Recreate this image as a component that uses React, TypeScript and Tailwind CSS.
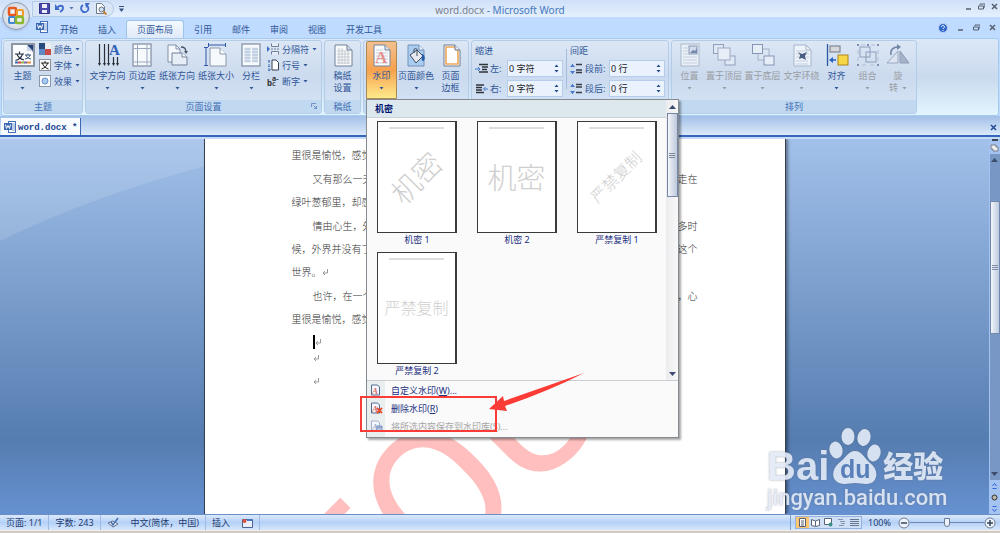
import { useState, type ReactNode } from "react";

const tabs = ["开始", "插入", "页面布局", "引用", "邮件", "审阅", "视图", "开发工具"];

const previews = [
  { label: "机密 1", text: "机密", style: "text-[29px] -rotate-45" },
  { label: "机密 2", text: "机密", style: "text-[29px]" },
  { label: "严禁复制 1", text: "严禁复制", style: "text-[16px] -rotate-45" },
  { label: "严禁复制 2", text: "严禁复制", style: "text-[16px]" },
];

const paragraphs = [
  [{ left: "里很是愉悦，感觉" }],
  [
    { left: "又有那么一天", right: "走在", indent: true },
    { left: "绿叶葱郁里，却感" },
  ],
  [
    { left: "情由心生，外", right: "多时", indent: true },
    { left: "候，外界并没有了", right: "这个" },
    { left: "世界。", mark: true },
  ],
  [
    { left: "也许，在一个", right: "，心", indent: true },
    { left: "里很是愉悦，感觉" },
  ],
] as { left: string; right?: string; indent?: boolean; mark?: boolean }[][];

function Svg({ w = 24, h = 24, children }: { w?: number; h?: number; children: ReactNode }) {
  return (
    <svg width={w} height={h} viewBox={`0 0 ${w} ${h}`} fill="none" className="shrink-0" aria-hidden="true">
      {children}
    </svg>
  );
}

function Caret({ up = false }: { up?: boolean }) {
  return (
    <Svg w={5} h={3}>
      <path d={up ? "M.5 3L2.5 .5L4.500 3Z" : "M.5 0L2.5 2.500L4.500 0Z"} fill="currentColor" />
    </Svg>
  );
}

// ---- ribbon icons ----

const ThemeIcon = () => (
  <Svg>
    <rect x="1" y="1" width="22" height="22" fill="#fbfcfe" stroke="#8d97a4" strokeWidth="2" />
    <path d="M16 2h6v7z" fill="#243f7c" />
    <path d="M16 2v6h6z" fill="#c9d6e8" />
    <path d="M4 11h9M8.500 8.500V11M6 11c1 3.500 3 5 7 6M11.500 11c-1 3.500-3.500 5.500-7 6.500" stroke="#222c3c" strokeWidth="1.100" />
    <path d="M14 12h6M17 10.500V12M15 12c.5 2 2 3.500 5 4M19 12c-.5 2-2 3.500-5 4" stroke="#37507c" />
    <path d="M4 19.500h3" stroke="#3a6bb5" strokeWidth="2" />
    <path d="M7 19.500h3" stroke="#d2473c" strokeWidth="2" />
    <path d="M10 19.500h3" stroke="#8eb548" strokeWidth="2" />
    <path d="M13 19.500h3" stroke="#7f5fa8" strokeWidth="2" />
    <path d="M16 19.500h4" stroke="#e99340" strokeWidth="2" />
  </Svg>
);

const DirectionIcon = () => (
  <Svg>
    <path d="M3.500 1v21M8.500 1v21M12.500 1v21M17.500 14v8M21.500 14v8" stroke="#2b3038" strokeWidth="1.200" />
    <path d="M2 20l1.500 3L5 20zM7 20l1.500 3 1.500-3zM11 20l1.500 3 1.500-3zM16 20l1.500 3 1.500-3zM20 20l1.500 3 1.500-3z" fill="#2b3038" />
    <text x="13" y="12" fontSize="15" fontWeight="700" fill="#2e62b4" fontFamily="Liberation Serif">A</text>
  </Svg>
);

const MarginIcon = () => (
  <Svg>
    <rect x="3" y="1" width="18" height="22" fill="#f7fafd" stroke="#8794a8" strokeWidth="1.300" />
    <path d="M7.500 1.500v21M17 1.500v21M3.500 5.500h17M3.500 19h17" stroke="#9aa8c1" />
  </Svg>
);

const OrientationIcon = () => (
  <Svg>
    <path d="M3 2h8l4 4v13H3z" fill="#f4f8fc" stroke="#8190a7" />
    <path d="M11 2v4h4" stroke="#8190a7" />
    <path d="M7 10h10l5 4v8H7z" fill="#e7eef6" stroke="#71819b" />
    <path d="M17 10v4h5" fill="#fff" stroke="#71819b" />
    <path d="M16 4c3 0 5 1 5 5" stroke="#4b5564" strokeWidth="1.300" />
    <path d="M19 8h4l-2 3z" fill="#4b5564" />
  </Svg>
);

const SizeIcon = () => (
  <Svg>
    <path d="M6 5h10l6 6v12H6z" fill="#f6f9fc" stroke="#8b98ad" />
    <path d="M16 5v6h6" fill="#fff" stroke="#8b98ad" />
    <path d="M5 2h16M2 5v17" stroke="#2c57aa" />
    <path d="M4.500 0v4M21.500 0v4M0 4.500h4M0 22.500h4" stroke="#2c57aa" />
  </Svg>
);

const ColumnsIcon = () => (
  <Svg>
    <rect x="3" y="1" width="18" height="22" fill="#f7fafd" stroke="#8794a8" strokeWidth="1.300" />
    <path d="M5.500 6h6M13 6h6M5.500 9h6M13 9h6M5.500 12h6M13 12h6M5.500 15h6M13 15h6M5.500 18h6M13 18h6" stroke="#c4d1e4" strokeWidth="2.400" />
  </Svg>
);

const GridPaperIcon = () => (
  <Svg>
    <path d="M4 2h12l5 5v16H4z" fill="#f8fafc" stroke="#718096" />
    <path d="M16 2v5h5" fill="#cdd8e6" stroke="#718096" />
    <path d="M6 8h13M6 11h13M6 14h13M6 17h13M6 20h13M8 5v16M11 5v16M14 8v13M17 8v13" stroke="#b9c0ca" strokeWidth=".8" />
  </Svg>
);

const WatermarkIcon = () => (
  <Svg>
    <path d="M4 2h11l5 5v16H4z" fill="#fafbfd" stroke="#74839c" />
    <path d="M15 2v5h5" fill="#dbe4ef" stroke="#74839c" />
    <path d="M6 7h7M6 10h12M6 13h12M6 16h12M6 20h12" stroke="#c8d0dc" />
    <text x="5" y="20" fontSize="17" fontWeight="700" fill="#e4908c" fontFamily="Liberation Serif">A</text>
  </Svg>
);

const PageColorIcon = () => (
  <Svg>
    <path d="M4 2h11l5 5v16H4z" fill="#a8cdf1" stroke="#7590b5" />
    <path d="M15 2v5h5" fill="#eaf3fb" stroke="#7590b5" />
    <path d="M6 12l7-5 6 6-7 7z" fill="#e5e9ee" stroke="#414b5b" />
    <path d="M13 13V7c0-2-3-2-3 0v3" stroke="#414b5b" />
    <path d="M18 11c4 1 3 7 1 7s-1-3-1-7z" fill="#255aa9" />
  </Svg>
);

const BorderIcon = () => (
  <Svg>
    <path d="M5 2h11l5 5v16H5z" fill="#fff" stroke="#6c7c92" />
    <path d="M7 4h8l4 4v13H7z" stroke="#eda65c" strokeWidth="1.600" />
    <path d="M16 2v5h5" fill="#e2eaf3" stroke="#6c7c92" />
  </Svg>
);

const PositionIcon = () => (
  <Svg>
    <rect x="3" y="1" width="18" height="22" fill="#e9f0f8" stroke="#aab7ca" />
    <rect x="11" y="3" width="8" height="8" fill="#d1dbea" stroke="#8999b3" />
    <path d="M12 10l3-3 2 1 2-3v5z" fill="#7388ab" />
    <path d="M5 5h5M5 8h5M5 11h5M5 14h14M5 17h14M5 20h14" stroke="#c6d0df" />
  </Svg>
);

const FrontIcon = () => (
  <Svg>
    <rect x="1.500" y="1.500" width="10" height="9" fill="#dfe8f4" stroke="#8fa0bd" />
    <rect x="13" y="13" width="10" height="9" fill="#dfe8f4" stroke="#8fa0bd" />
    <rect x="6" y="5" width="12" height="12" fill="#e8eef7" stroke="#9ba9c1" />
  </Svg>
);

const BackIcon = () => (
  <Svg>
    <rect x="7" y="6" width="11" height="11" fill="#dbe5f2" stroke="#a3b1c8" />
    <rect x="1.500" y="1.500" width="10" height="9" fill="#e6edf7" stroke="#8595b4" />
    <rect x="13" y="13" width="10" height="9" fill="#e6edf7" stroke="#8595b4" />
  </Svg>
);

const WrapIcon = () => (
  <Svg>
    <path d="M4 2h12l5 5v16H4z" fill="#edf3fa" stroke="#a7b5ca" />
    <path d="M16 2v5h5" stroke="#a7b5ca" />
    <path d="M6 8h12M6 11h3M16 11h3M6 14h3M16 14h3M6 18h12M6 21h12" stroke="#c2cedf" />
    <path d="M8 9l4 2 5-2-2 4 1 4-4-2-3 1 1-4z" fill="#4a5e84" />
  </Svg>
);

const AlignIcon = () => (
  <Svg>
    <path d="M2.500 1v22" stroke="#2c57a3" strokeWidth="1.300" />
    <rect x="5" y="3" width="10" height="6" fill="#d6d8da" stroke="#6f7681" />
    <rect x="13" y="12" width="10" height="10" fill="#f8d747" stroke="#ab851f" />
    <path d="M11 17H6" stroke="#2c63bd" strokeWidth="1.600" />
    <path d="M4 17l4-3v6z" fill="#2c63bd" />
  </Svg>
);

const CombineIcon = () => (
  <Svg>
    <rect x="4" y="4" width="10" height="10" stroke="#8e9dbb" />
    <rect x="10" y="9" width="10" height="10" stroke="#8e9dbb" />
    <path d="M1 1h2v2H1zM21 1h2v2h-2zM1 21h2v2H1zM21 21h2v2h-2zM11 1h2v2h-2z" fill="#7e8faf" />
    <path d="M5 2h4M15 2h4M2 7v4M2 14v4M22 7v4M22 14v4M6 22h4M14 22h4" stroke="#b3bfd3" />
  </Svg>
);

const RotateIcon = () => (
  <Svg>
    <path d="M1 20h11V8z" fill="#dce4ef" stroke="#9aa8c0" />
    <path d="M14 8l9 12h-9z" fill="#a5b2c7" stroke="#8d9cb6" />
    <path d="M5 12C4 7 7 4 12 4" stroke="#7486a6" strokeWidth="1.500" />
    <path d="M11 1l4 3-4 3z" fill="#7486a6" />
  </Svg>
);

const PageAIcon = ({ remove = false, muted = false }: { remove?: boolean; muted?: boolean }) => (
  <Svg w={13} h={12}>
    <path d="M1.500 1h6l2 2v8h-8z" fill="#f5f8fc" stroke={muted ? "#9fb1ce" : "#566a91"} />
    <text x="2" y="10" fontSize="9" fontStyle="italic" fontWeight="700" fill={muted ? "#9db0d2" : "#d6716e"} fontFamily="Liberation Serif">A</text>
    {remove && <path d="M7 6l5 5M12 6l-5 5" stroke="#e94f2d" strokeWidth="1.800" />}
    {muted && <path d="M7 6h5v5H7zM8 6v2h3V6" fill="#c5d3ea" stroke="#7d94bf" />}
  </Svg>
);

const WordIcon = () => (
  <Svg w={12} h={12}>
    <rect x="4.500" y=".5" width="7" height="11" fill="#fff" stroke="#4670b5" />
    <path d="M8 3h3M8 5h3M8 7h3M8 9h3" stroke="#7b9bd0" />
    <rect x="0" y="2" width="8" height="7" fill="#3b68b4" />
    <path d="M1.500 3.500l1 4L4 4.500l1.500 3 1-4" stroke="#fff" />
  </Svg>
);

const Launcher = () => (
  <Svg w={6} h={6}>
    <path d="M.5 4V.5H5M2.500 2.500l3 3M5.500 3v2.500H3" stroke="#6f93c6" />
  </Svg>
);

type GroupProps = { label: string; className?: string; launcher?: boolean; children: ReactNode };

function Group({ label, className = "", launcher, children }: GroupProps) {
  return (
    <section
      className={`flex shrink-0 flex-col rounded-[3px] border border-[#b3cde9] bg-linear-to-b from-[#dce7f5] via-[#cbdaee] to-[#d5e4f5] ${className}`}
    >
      <div className="flex h-[59px] items-start px-[2px]">{children}</div>
      <h2 className="relative h-[13px] rounded-b-[2px] bg-[#c1d8f1] text-center leading-[13px] text-[#4471b4]">
        {label}
        {launcher && (
          <button type="button" aria-label={`${label}选项`} className="absolute right-1 bottom-1">
            <Launcher />
          </button>
        )}
      </h2>
    </section>
  );
}

type BigButtonProps = {
  icon: ReactNode;
  label: string;
  second?: string;
  width: string;
  caret?: boolean;
  disabled?: boolean;
};

function BigButton({ icon, label, second, width, caret = true, disabled }: BigButtonProps) {
  return (
    <button
      type="button"
      disabled={disabled}
      className={`flex h-[57px] shrink-0 flex-col items-center pt-[2px] whitespace-nowrap ${width} ${
        disabled ? "text-[#9a9da3]" : "text-[#2f5697]"
      }`}
    >
      {icon}
      <span className="mt-[3px] leading-3">{label}</span>
      <span className="flex h-3 items-center gap-1 leading-3">
        {second}
        {caret && <Caret />}
      </span>
    </button>
  );
}

function SmallButton({ icon, label }: { icon: ReactNode; label: string }) {
  return (
    <button type="button" className="flex h-4 items-center gap-[3px] whitespace-nowrap text-[#2f5697]">
      {icon}
      {label}
      <Caret />
    </button>
  );
}

function Stepper({ id, label, unit, after }: { id: string; label: string; unit: string; after?: boolean }) {
  const [value, setValue] = useState(0);

  return (
    <div className="flex h-[17px] items-center">
      <Svg w={13} h={12}>
        {unit === "行" ? (
          <>
            <path d={after ? "M6 1.500h6M6 4h6M6 9.500h6" : "M6 1.500h6M6 7h6M6 9.500h6"} stroke="#3a3e45" strokeWidth="1.600" />
            <path d="M2.500 1v3M2.500 8v3" stroke="#4779cb" />
            <path d="M0 4l2.500-3L5 4zM0 8l2.500 3L5 8z" fill="#4779cb" />
          </>
        ) : (
          <>
            <path
              d={after ? "M1 2h8M1 4.500h6M1 7h6M1 9.500h8" : "M4 1.500h9M7 4h6M7 6.500h5M4 9h9"}
              stroke="#30343b"
              strokeWidth="1.500"
            />
            <path d={after ? "M13 6H9M10.500 4L8.500 6l2 2" : "M0 6h4M3 4l2 2-2 2"} stroke="#4779cb" />
          </>
        )}
      </Svg>
      <label htmlFor={id} className="mx-[2px] flex-1 whitespace-nowrap text-[#2f5697]">
        {label}:
      </label>
      <div className="flex h-[17px] w-[56px] border border-[#b5cdea] bg-[#eaf3fd]">
        <input
          id={id}
          value={`${value} ${unit}`}
          onChange={(e) => setValue(parseInt(e.target.value) || 0)}
          className="w-0 flex-1 bg-transparent pl-px text-[#222] outline-none"
        />
        <span className="flex w-3 flex-col items-center justify-between py-[3px] text-[#25488a]">
          <button type="button" aria-label={`${label}增加`} onClick={() => setValue(value + 1)}>
            <Caret up />
          </button>
          <button type="button" aria-label={`${label}减少`} onClick={() => setValue(value - 1)}>
            <Caret />
          </button>
        </span>
      </div>
    </div>
  );
}

function WatermarkMenu() {
  return (
    <div className="absolute top-full left-0 z-20 w-[313px] border border-[#868b91] bg-[#fafafa] text-[#1b2f7e] shadow-[2px_2px_2px_rgba(0,0,0,0.35)]">
      <div className="flex border-b border-[#c9ced2]">
        <div className="flex-1">
          <h3 className="h-[18px] border-b border-[#c9d2d8] bg-[#dde7ee] pl-2 leading-[17px] font-bold text-[#00156e]">
            机密
          </h3>
          <div className="grid grid-cols-[80px_80px_80px] gap-x-5 gap-y-[5px] pt-[3px] pb-[2px] pl-[10px]">
            {previews.map((item) => (
              <button type="button" key={item.label} className="text-center whitespace-nowrap">
                <span className="relative flex h-[112px] items-center justify-center border border-r-2 border-[#3a3a3a] bg-white">
                  <span className="absolute top-[5px] right-[11px] left-[11px] h-[2px] bg-[#dedede]" />
                  <span className={`font-light text-[#cfcfcf] ${item.style}`}>{item.text}</span>
                </span>
                <span className="block h-[14px] leading-[14px]">{item.label}</span>
              </button>
            ))}
          </div>
        </div>
        <div className="flex w-3 flex-col items-center justify-between bg-linear-to-r from-[#ececee] to-[#f8f8f9] text-[#3c4a70]">
          <div className="flex w-full flex-col items-center">
            <button type="button" aria-label="向上滚动" className="flex h-[13px] items-center">
              <Svg w={7} h={4}>
                <path d="M0 4L3.500 0L7 4Z" fill="currentColor" />
              </Svg>
            </button>
            <div className="flex h-[84px] w-[11px] items-center justify-center border border-[#7886a6] bg-linear-to-r from-[#f3f5f9] to-[#bdc8dc]">
              <span className="flex h-[5px] w-[6px] items-center border-y border-[#7e879c]">
                <span className="h-px w-full bg-[#7e879c]" />
              </span>
            </div>
          </div>
          <button type="button" aria-label="向下滚动" className="flex h-[13px] items-center">
            <Svg w={7} h={4}>
              <path d="M0 0L3.500 4L7 0Z" fill="currentColor" />
            </Svg>
          </button>
        </div>
      </div>
      <div className="bg-linear-to-r from-[#e9eeee] from-[18px] to-[#fafafa] to-[18px] pb-[2px]">
        <button type="button" className="flex h-[18px] w-full items-center gap-2 pl-[3px]">
          <PageAIcon />
          <span>
            自定义水印(<u>W</u>)...
          </span>
        </button>
        <button type="button" className="flex h-[18px] w-full items-center gap-2 pl-[3px]">
          <PageAIcon remove />
          <span>
            删除水印(<u>R</u>)
          </span>
        </button>
        <button type="button" disabled className="flex h-[18px] w-full items-center gap-2 pl-[3px] text-[#a5a5a5]">
          <PageAIcon muted />
          <span>
            将所选内容保存到水印库(<u>S</u>)...
          </span>
        </button>
      </div>
      {/* callout on the delete entry */}
      <div className="absolute top-[296px] -left-[7px] h-[36px] w-[137px] border-2 border-[#fb3b36]" />
      <svg width="96" height="40" viewBox="0 0 96 40" className="absolute top-[273px] left-[122px]" aria-hidden="true">
        <path d="M95 0L15 28L14 23L0 36L18 38L16 33Q60 18 95 0Z" fill="#fb3b36" />
      </svg>
    </div>
  );
}

function Ribbon() {
  return (
    <div className="relative z-10 mx-px flex gap-[2px] rounded-[3px] border border-[#a5cbef] bg-linear-to-b from-[#dce8f7] via-[#cadaee] to-[#e2f5ff] p-px">
      <Group label="主题" className="w-[80px]">
        <BigButton icon={<ThemeIcon />} label="主题" width="w-[33px]" />
        <div className="flex flex-col">
          <SmallButton
            icon={
              <Svg w={12} h={12}>
                <path d="M0 0h6v6H0z" fill="#274a7d" />
                <path d="M6 0h6v6H6z" fill="#eceef0" />
                <path d="M0 6h6v6H0z" fill="#5c8ac4" />
                <path d="M6 6h6v6H6z" fill="#c94c48" />
              </Svg>
            }
            label="颜色"
          />
          <SmallButton
            icon={
              <Svg w={12} h={12}>
                <rect x=".5" y=".5" width="11" height="11" fill="#f8f8f8" stroke="#8a919b" />
                <path d="M2 4h8M6 2v2M3.500 4c.5 3 3 5 6 6M8.500 4c-.5 3-3 5-6 6" stroke="#222" />
              </Svg>
            }
            label="字体"
          />
          <SmallButton
            icon={
              <Svg w={12} h={12}>
                <rect x=".5" y=".5" width="11" height="11" fill="#fbfcfe" stroke="#8a97aa" />
                <circle cx="6" cy="6" r="3" fill="#a9c8f0" stroke="#6390cf" />
              </Svg>
            }
            label="效果"
          />
        </div>
      </Group>

      <Group label="页面设置" className="w-[237px]" launcher>
        <BigButton icon={<DirectionIcon />} label="文字方向" width="w-[39px]" />
        <BigButton icon={<MarginIcon />} label="页边距" width="w-[30px]" />
        <BigButton icon={<OrientationIcon />} label="纸张方向" width="w-[40px]" />
        <BigButton icon={<SizeIcon />} label="纸张大小" width="w-[38px]" />
        <BigButton icon={<ColumnsIcon />} label="分栏" width="w-[32px]" />
        <div className="flex flex-col">
          <SmallButton
            icon={
              <Svg w={12} h={12}>
                <path d="M4.500.5v3h7v-3M4.500 11.500v-3h7v3" fill="#e8eef6" stroke="#71819a" />
                <path d="M0 3l3 3-3 3z" fill="#3d70c2" />
                <path d="M4 6h8" stroke="#71819a" strokeDasharray="2 1" />
              </Svg>
            }
            label="分隔符"
          />
          <SmallButton
            icon={
              <Svg w={12} h={12}>
                <path d="M5 1h4l2.500 2.500V11H5z" fill="#fff" stroke="#39414d" />
                <path d="M1 2h2M2 1v3M1 6h2M1 7.500h2M1 10h2v1.500H1" stroke="#4a78bc" />
              </Svg>
            }
            label="行号"
          />
          <SmallButton
            icon={
              <Svg w={12} h={12}>
                <text x="0" y="11" fontSize="8" fontWeight="700" fill="#333">b</text>
                <text x="5" y="6" fontSize="7" fontWeight="700" fill="#333">a-</text>
                <text x="5" y="11" fontSize="7" fontWeight="700" fill="#555">c</text>
              </Svg>
            }
            label="断字"
          />
        </div>
      </Group>

      <Group label="稿纸" className="w-[37px]">
        <BigButton icon={<GridPaperIcon />} label="稿纸" second="设置" width="w-[31px]" caret={false} />
      </Group>

      <Group label="页面背景" className="w-[106px]">
        <div className="relative">
          <button
            type="button"
            aria-haspopup="true"
            aria-expanded="true"
            className="flex h-[58px] w-[31px] flex-col items-center rounded-t-[2px] border border-[#a98a55] bg-linear-to-b from-[#f3c08e] via-[#f7a14d] to-[#fdea8c] pt-px text-[#2f5697]"
          >
            <WatermarkIcon />
            <span className="mt-[3px] leading-3">水印</span>
            <span className="flex h-3 items-center">
              <Caret />
            </span>
          </button>
          <WatermarkMenu />
        </div>
        <BigButton icon={<PageColorIcon />} label="页面颜色" width="w-[38px]" />
        <BigButton icon={<BorderIcon />} label="页面" second="边框" width="w-[31px]" caret={false} />
      </Group>

      <Group label="段落" className="w-[198px]">
        <fieldset className="w-[89px] pl-px">
          <legend className="h-[19px] leading-[19px] text-[#2f5697]">缩进</legend>
          <div className="flex flex-col gap-[3px]">
            <Stepper id="indent-left" label="左" unit="字符" />
            <Stepper id="indent-right" label="右" unit="字符" after />
          </div>
        </fieldset>
        <div className="mt-2 ml-[3px] h-10 w-px bg-[#a5bddd]" />
        <fieldset className="w-[98px] pl-[3px]">
          <legend className="h-[19px] leading-[19px] text-[#2f5697]">间距</legend>
          <div className="flex flex-col gap-[3px]">
            <Stepper id="space-before" label="段前" unit="行" />
            <Stepper id="space-after" label="段后" unit="行" after />
          </div>
        </fieldset>
      </Group>

      <Group label="排列" className="w-[246px]">
        <BigButton icon={<PositionIcon />} label="位置" width="w-[31px]" disabled />
        <BigButton icon={<FrontIcon />} label="置于顶层" width="w-[38px]" disabled />
        <BigButton icon={<BackIcon />} label="置于底层" width="w-[39px]" disabled />
        <BigButton icon={<WrapIcon />} label="文字环绕" width="w-[39px]" disabled />
        <BigButton icon={<AlignIcon />} label="对齐" width="w-[31px]" />
        <BigButton icon={<CombineIcon />} label="组合" width="w-[31px]" disabled />
        <BigButton icon={<RotateIcon />} label="旋" second="转" width="w-[30px]" disabled />
      </Group>
    </div>
  );
}

function WindowButtons({ wide = false }: { wide?: boolean }) {
  return (
    <div className={`flex items-center text-[#56606e] ${wide ? "gap-[9px]" : "gap-[6px]"}`}>
      <button type="button" aria-label="最小化">
        <Svg w={7} h={7}>
          <path d="M1 6h5" stroke="currentColor" strokeWidth="1.500" />
        </Svg>
      </button>
      <button type="button" aria-label="还原">
        <Svg w={7} h={7}>
          <path d="M2 2V1h5v3H6M.5 3h5v3h-5z" stroke="currentColor" />
        </Svg>
      </button>
      <button type="button" aria-label="关闭">
        <Svg w={7} h={7}>
          <path d="M1 1l5 5M6 1L1 6" stroke="currentColor" strokeWidth="1.500" />
        </Svg>
      </button>
    </div>
  );
}

function Header() {
  return (
    <header className="relative">
      <button
        type="button"
        aria-label="Office 按钮"
        className="absolute top-[2px] left-[2px] z-10 flex size-[28px] items-center justify-center rounded-full border border-[#8d9bb0] bg-radial from-white to-[#c3ccd9] shadow-sm"
      >
        <Svg w={20} h={20}>
          <rect x="3" y="2" width="7" height="7" rx="1" stroke="#e8591f" strokeWidth="2.500" />
          <rect x="11" y="4" width="6" height="6" rx="1" stroke="#f09c2c" strokeWidth="2" />
          <rect x="3" y="11" width="6" height="6" rx="1" stroke="#4287cf" strokeWidth="2" />
          <rect x="10" y="11" width="7" height="6" rx="1" stroke="#8ab82e" strokeWidth="2.400" />
        </Svg>
      </button>
      <div className="grid h-[17px] grid-cols-[1fr_auto_1fr] items-center bg-linear-to-b from-[#cfe0f8] to-[#e5f0fd]">
        <div className="flex items-center pl-[32px]">
          <div className="flex h-4 w-[82px] items-center rounded-r-full border border-[#b4cbe8] bg-[#d9e6f7] pl-[6px] text-[#5277b5]">
            <button type="button" aria-label="保存">
              <Svg w={11} h={11}>
                <path d="M.5.5h10v10H.5z" fill="#4c49ae" stroke="#34328a" />
                <path d="M3 1h5v4H3zM3 7h5v3H3z" fill="#eceefa" />
              </Svg>
            </button>
            <button type="button" aria-label="撤消" className="ml-[5px]">
              <Svg w={10} h={11}>
                <path d="M2 5C4 2 8 2 8 5c0 2-1 3-3 4" stroke="#3c6bcd" strokeWidth="1.800" />
                <path d="M0 1v6h5z" fill="#3c6bcd" />
              </Svg>
            </button>
            <span className="mx-1">
              <Caret />
            </span>
            <button type="button" aria-label="重复" className="ml-[2px]">
              <Svg w={10} h={11}>
                <path d="M3 2C-1 5 2 10 6 9c3-1 3-5 1-6" stroke="#3c6bcd" strokeWidth="1.800" />
                <path d="M5 0h5L6 5z" fill="#3c6bcd" />
              </Svg>
            </button>
            <button type="button" aria-label="打印预览" className="ml-[5px]">
              <Svg w={12} h={12}>
                <path d="M1.500.5h5l3 3v7h-8z" fill="#fff" stroke="#6d7d96" />
                <circle cx="6.500" cy="6.500" r="2.500" fill="#cfe0ee" stroke="#68727f" />
                <path d="M8.500 8.500l3 3" stroke="#cb7f27" strokeWidth="1.800" />
              </Svg>
            </button>
          </div>
          <button type="button" aria-label="自定义快速访问工具栏" className="ml-[5px] text-[#35507f]">
            <Svg w={5} h={6}>
              <path d="M0 .5h5" stroke="currentColor" />
              <path d="M0 2.500h5L2.500 6z" fill="currentColor" />
            </Svg>
          </button>
        </div>
        <h1 className="pt-[3px] text-[10px] leading-none text-[#7b828d]">
          word.docx <span className="text-[#4678bd]">- Microsoft Word</span>
        </h1>
        <div className="-mt-1 flex justify-end pr-[2px]">
          <WindowButtons />
        </div>
      </div>
      <nav className="flex h-[21px] items-stretch bg-[#bfdbff] pr-1 pl-[36px]">
        <span className="mt-[4px] mr-[2px]">
          <WordIcon />
        </span>
        <div role="tablist" className="flex">
          {tabs.map((tab) => (
            <button
              type="button"
              role="tab"
              key={tab}
              aria-selected={tab === "页面布局"}
              className={`mt-[3px] rounded-t-[3px] px-[10px] leading-none text-[#2f5697] ${
                tab === "页面布局" ? "border-x border-t border-[#9dc3ec] bg-linear-to-b from-[#f4f9fe] to-[#dfeaf8]" : ""
              }`}
            >
              {tab}
            </button>
          ))}
        </div>
        <div className="ml-auto flex items-center gap-[9px]">
          <button type="button" aria-label="帮助">
            <Svg w={10} h={10}>
              <circle cx="5" cy="5" r="4.500" fill="#3167c8" stroke="#b7cdf0" />
              <path d="M3.500 4c0-2 3-2 3 0 0 1-1.500 1-1.500 2M5 7v1" stroke="#fff" />
            </Svg>
          </button>
          <WindowButtons wide />
        </div>
      </nav>
    </header>
  );
}

function Mark() {
  return (
    <Svg w={6} h={7}>
      <path d="M5.500 0v4H1M3 2L1 4l2 2" stroke="#9a9a9a" />
    </Svg>
  );
}

function Workspace() {
  return (
    <main className="relative flex min-h-0 flex-1 border-t-2 border-[#c4daf5] bg-linear-to-b from-[#a2c1ea] via-[#567db0] via-80% to-[#6691d1]">
      <svg className="absolute top-0 left-0" width="205" height="102" viewBox="0 0 205 102" aria-hidden="true">
        <path d="M0 0H205V27Q90 58 0 102Z" fill="#fff" fillOpacity=".12" />
      </svg>
      <div className="flex min-w-0 flex-1 justify-center overflow-hidden">
        <article className="relative w-[582px] shrink-0 overflow-hidden border-x border-[#35404f] bg-white px-[87px] pt-[5px] font-['Liberation_Serif','Noto_Sans_CJK_SC',serif] text-[10px] leading-[23px] font-light text-[#333] shadow-[2px_0_3px_rgba(0,0,0,0.4)]">
          <div className="absolute top-[258px] left-[63px] origin-center -rotate-45 font-['Liberation_Sans_Narrow','Roboto',sans-serif] text-[188px] leading-none font-normal whitespace-nowrap text-[#ffbfbf]">
            FOU
          </div>
          <div className="relative flex flex-col gap-px">
            {paragraphs.map((lines, i) => (
              <div key={i}>
                {lines.map((line) => (
                  <p key={line.left} className={`flex justify-between ${line.indent ? "pl-[21px]" : ""}`}>
                    <span className="flex items-center">
                      {line.left}
                      {line.mark && <Mark />}
                    </span>
                    <span>{line.right}</span>
                  </p>
                ))}
              </div>
            ))}
            <div className="flex flex-col pl-[21px]">
              <p className="flex h-5 items-center">
                <span className="h-[14px] w-[2px] bg-black" />
                <Mark />
              </p>
              <p className="flex h-3 items-center">
                <Mark />
              </p>
              <p className="mt-[11px] flex h-3 items-center">
                <Mark />
              </p>
            </div>
          </div>
        </article>
      </div>
      <div className="flex w-[11px] flex-col items-center bg-[#a5c3f0] text-[#3c4c6c]">
        <span className="h-[2px] w-[6px] bg-[#3c4658]" />
        <button type="button" aria-label="标尺" className="flex h-[13px] items-center">
          <Svg w={9} h={9}>
            <path d="M1 2h5v2h2v4H3V6H1z" fill="#eee" stroke="#777f8d" />
          </Svg>
        </button>
        <div className="flex w-[10px] flex-1 flex-col items-center justify-between bg-[#7897c5]">
          <div className="flex w-full flex-col items-center">
            <button type="button" aria-label="上一行" className="flex h-3 items-center">
              <Svg w={7} h={4}>
                <path d="M0 4L3.500 0L7 4Z" fill="currentColor" />
              </Svg>
            </button>
            <div className="mt-[35px] flex h-[133px] w-full items-center justify-center border border-[#7187ae] bg-linear-to-r from-[#f2f5f9] to-[#bdcbe0]">
              <span className="flex h-[5px] w-[6px] items-center border-y border-[#7f8ca6]">
                <span className="h-px w-full bg-[#7f8ca6]" />
              </span>
            </div>
          </div>
          <button type="button" aria-label="下一行" className="flex h-3 items-center">
            <Svg w={7} h={4}>
              <path d="M0 0L3.500 4L7 0Z" fill="currentColor" />
            </Svg>
          </button>
        </div>
        <div className="flex h-[34px] flex-col items-center justify-around">
          <button type="button" aria-label="前一页">
            <Svg w={5} h={6}>
              <path d="M.5 3l2-2.500 2 2.500M.5 5.500h4" stroke="#2f65e0" />
            </Svg>
          </button>
          <button type="button" aria-label="选择浏览对象">
            <Svg w={7} h={7}>
              <circle cx="3.500" cy="3.500" r="2.500" fill="#b9b6ac" stroke="#333" />
            </Svg>
          </button>
          <button type="button" aria-label="下一页">
            <Svg w={5} h={6}>
              <path d="M.5.5h4M.5 3l2 2.500 2-2.500" stroke="#2f65e0" />
            </Svg>
          </button>
        </div>
      </div>
      <Logo />
    </main>
  );
}

function Logo() {
  return (
    <div className="pointer-events-none absolute right-[54px] bottom-[2px] w-[179px] font-['Roboto','Noto_Sans_CJK_SC',sans-serif] text-[#e3ebf7] opacity-90 drop-shadow-[0_0_1px_rgba(90,100,120,0.6)]">
      <div className="flex items-end">
        <span className="font-['Liberation_Sans',sans-serif] text-[40px] leading-[36px] font-bold">Bai</span>
        <Svg w={52} h={57}>
          <g fill="#e3ebf7">
            <ellipse cx="7" cy="23" rx="6.500" ry="8.500" transform="rotate(-12 7 23)" />
            <ellipse cx="19" cy="9.500" rx="6.500" ry="8.500" />
            <ellipse cx="35" cy="10.500" rx="6.500" ry="8.500" transform="rotate(15 35 10.500)" />
            <ellipse cx="45" cy="26" rx="6.500" ry="8.500" transform="rotate(15 45 26)" />
            <path d="M26 24c7 0 10 8 15 12 7 5 8 13 4 18-5 5-12 2-19 2s-13 3-19-2c-5-5-3-13 3-18 6-4 9-12 16-12z" />
          </g>
          <text x="11" y="51" fontSize="25" fontWeight="700" fill="#587fb9" fontFamily="Liberation Sans">du</text>
        </Svg>
        <span className="pb-[2px] pl-[2px] text-[30px] leading-[30px] font-black">经验</span>
      </div>
      <p className="text-[22px] leading-[28px] font-medium">jingyan.baidu.com</p>
    </div>
  );
}

const separator = "flex h-full items-center border-r border-[#9dbbe4]";

function StatusBar() {
  return (
    <footer>
      <div className="flex h-4 items-center border-t border-[#6a8fc6] bg-linear-to-b from-[#dce9fc] via-[#b4d1f7] to-[#d8e7fb] text-[#1f3a70]">
        <span className={`px-[6px] ${separator}`}>页面: 1/1</span>
        <span className={`px-[6px] ${separator}`}>字数: 243</span>
        <span className={`gap-[12px] px-[6px] ${separator}`}>
          <Svg w={12} h={11}>
            <path d="M1 6l5-2 5 3-5 3z" fill="#f2f4f8" stroke="#5d6f8e" />
            <path d="M4 5l2 3 5-7" stroke="#4770b3" strokeWidth="1.500" />
          </Svg>
          中文(简体，中国)
        </span>
        <span className={`gap-[12px] px-[6px] ${separator}`}>
          插入
          <Svg w={11} h={10}>
            <path d="M.5 1.500h10v8H.5z" fill="#eaf0fa" stroke="#4a628d" />
            <path d="M5 2h5" stroke="#4a78c4" strokeWidth="2" />
            <circle cx="2.500" cy="3" r="2" fill="#da523b" />
          </Svg>
        </span>
        <div className="ml-auto flex h-full items-center border-l border-[#7d9fd0] pr-1 pl-1">
          <div className="flex h-[13px] items-center border border-[#94b2dd] bg-[#cfdff5]">
            {["页面视图", "阅读版式", "Web 版式", "大纲", "普通"].map((view, i) => (
              <button
                type="button"
                key={view}
                aria-label={view}
                className={`flex h-[11px] w-[13px] items-center justify-center ${i === 0 ? "bg-[#fbc66f]" : ""}`}
              >
                <Svg w={9} h={9}>
                  {i === 0 && <path d="M1.500.5h6v8h-6zM3 3h3M3 5h3M3 7h3" fill="#fff" stroke="#566070" />}
                  {i === 1 && <path d="M.5 1.500L4.500 3l4-1.500v6l-4 1-4-1zM4.500 3v5" fill="#fff" stroke="#596576" />}
                  {i === 2 && (
                    <>
                      <path d="M.5.500h7v6h-7z" fill="#fff" stroke="#596576" />
                      <circle cx="6.500" cy="6.500" r="2" fill="#3d8f8a" />
                    </>
                  )}
                  {i === 3 && <path d="M1 1.500h5M3 3.500h5M4 5.500h4M2 7.500h5" stroke="#8795ab" />}
                  {i === 4 && <path d="M0 1.500h9M0 3.500h9M0 5.500h9M0 7.500h9" stroke="#67768f" />}
                </Svg>
              </button>
            ))}
          </div>
          <span className="ml-[6px] w-[28px]">100%</span>
          <button type="button" aria-label="缩小" className="ml-[2px]">
            <Svg w={12} h={12}>
              <circle cx="6" cy="6" r="5" fill="#edf3fb" stroke="#6d7a8f" />
              <path d="M3 6h6" stroke="#36435b" strokeWidth="1.500" />
            </Svg>
          </button>
          <input
            type="range"
            aria-label="显示比例"
            min={0}
            max={200}
            defaultValue={100}
            className="h-[10px] w-[74px] appearance-none bg-transparent [&::-webkit-slider-runnable-track]:h-px [&::-webkit-slider-runnable-track]:bg-[#7188ad] [&::-webkit-slider-thumb]:-mt-1 [&::-webkit-slider-thumb]:h-[9px] [&::-webkit-slider-thumb]:w-[6px] [&::-webkit-slider-thumb]:appearance-none [&::-webkit-slider-thumb]:rounded-b-[3px] [&::-webkit-slider-thumb]:border [&::-webkit-slider-thumb]:border-[#6b7b95] [&::-webkit-slider-thumb]:bg-[#edf2fa]"
          />
          <button type="button" aria-label="放大">
            <Svg w={12} h={12}>
              <circle cx="6" cy="6" r="5" fill="#edf3fb" stroke="#6d7a8f" />
              <path d="M3 6h6M6 3v6" stroke="#36435b" strokeWidth="1.500" />
            </Svg>
          </button>
        </div>
      </div>
      <div className="h-[3px] border-t border-[#f3efe8] bg-[#cfcac4]" />
    </footer>
  );
}

export default function App() {
  return (
    <div
      lang="zh-CN"
      className="flex h-screen flex-col overflow-hidden bg-[#bfdbff] font-['Noto_Sans','Noto_Sans_CJK_SC',sans-serif] text-[9px] leading-none"
    >
      <Header />
      <Ribbon />
      <div className="flex h-[21px] items-end justify-between border-b-2 border-[#3564bd] bg-linear-to-b from-[#a3c0e8] to-[#dbe9fa] pr-[3px]">
        <button
          type="button"
          className="ml-px flex h-[17px] items-center gap-[2px] border-r border-[#3f68b4] bg-[#f7fafe] px-[3px] whitespace-pre text-[#1d4593]"
        >
          <WordIcon />
          <span className="pt-[3px] font-['Liberation_Mono',monospace] font-bold">word.docx *</span>
        </button>
        <button type="button" aria-label="关闭文档" className="mb-1 text-[#244b94]">
          <Svg w={7} h={7}>
            <path d="M1 1l5 5M6 1L1 6" stroke="currentColor" strokeWidth="1.500" />
          </Svg>
        </button>
      </div>
      <Workspace />
      <StatusBar />
    </div>
  );
}
